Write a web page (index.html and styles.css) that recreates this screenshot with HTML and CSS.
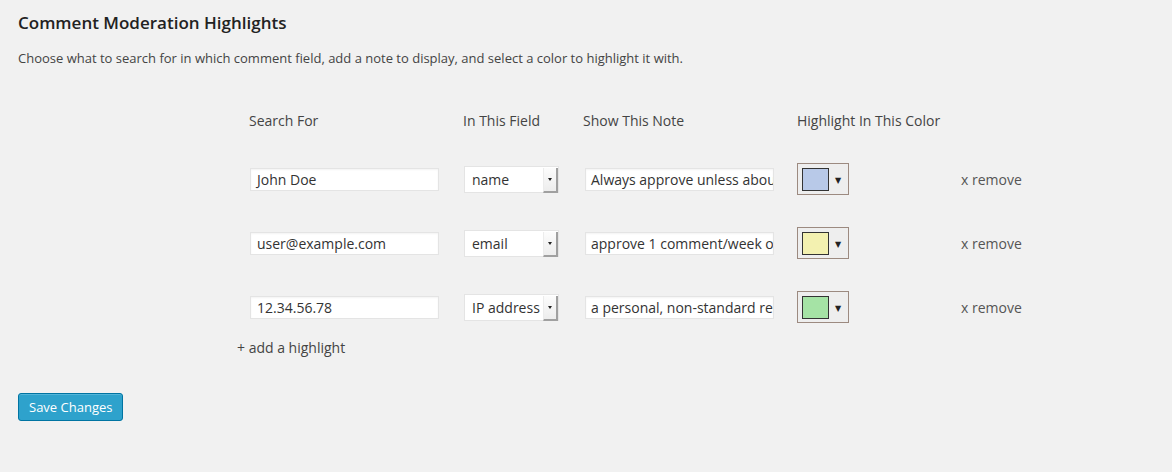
FILE: index.html
```html
<!DOCTYPE html>
<html>
<head>
<meta charset="utf-8">
<link rel="stylesheet" href="styles.css">
</head>
<body>
<div class="wrap">
  <h3 class="title">Comment Moderation Highlights</h3>
  <p class="desc">Choose what to search for in which comment field, add a note to display, and select a color to highlight it with.</p>

  <div class="highlights">
    <div class="grid">
      <div class="th">Search For</div>
      <div class="th">In This Field</div>
      <div class="th">Show This Note</div>
      <div class="th">Highlight In This Color</div>
      <div class="th"></div>

      <div class="cell"><div class="input">John Doe</div></div>
      <div class="cell"><div class="select"><span class="sel-text">name</span><span class="sel-btn"><span class="tri"></span></span></div></div>
      <div class="cell"><div class="input note">Always approve unless about</div></div>
      <div class="cell"><div class="picker"><span class="swatch blue"></span><span class="arrow">▼</span></div></div>
      <div class="cell"><span class="remove">x remove</span></div>

      <div class="cell"><div class="input">user@example.com</div></div>
      <div class="cell"><div class="select"><span class="sel-text">email</span><span class="sel-btn"><span class="tri"></span></span></div></div>
      <div class="cell"><div class="input note">approve 1 comment/week only</div></div>
      <div class="cell"><div class="picker"><span class="swatch yellow"></span><span class="arrow">▼</span></div></div>
      <div class="cell"><span class="remove">x remove</span></div>

      <div class="cell"><div class="input">12.34.56.78</div></div>
      <div class="cell"><div class="select"><span class="sel-text">IP address</span><span class="sel-btn"><span class="tri"></span></span></div></div>
      <div class="cell"><div class="input note">a personal, non-standard request</div></div>
      <div class="cell"><div class="picker"><span class="swatch green"></span><span class="arrow">▼</span></div></div>
      <div class="cell"><span class="remove">x remove</span></div>
    </div>
    <div class="add">+ add a highlight</div>
  </div>

  <div class="actions"><button class="save">Save Changes</button></div>
</div>
</body>
</html>
```

FILE: styles.css
```css
html, body {
  margin: 0;
  padding: 0;
  background: #f1f1f1;
}
body {
  font-family: "Open Sans", "DejaVu Sans", sans-serif;
  color: #444;
  font-size: 13px;
}
.wrap {
  padding: 12px 18px 0 18px;
}
.title {
  margin: 0;
  font-size: 17px;
  font-weight: 600;
  color: #222;
  line-height: 22px;
}
.desc {
  margin: 14px 0 0 0;
  font-size: 13px;
  line-height: 20px;
}
.highlights {
  margin-left: 219px;
  margin-top: 42px;
}
.grid {
  display: grid;
  grid-template-columns: 214px 120px 214px 164px auto;
  grid-template-rows: 37px repeat(3, 64px);
  padding-left: 12px;
  align-items: center;
}
.th {
  align-self: start;
  font-size: 14px;
  line-height: 22px;
  color: #444;
}
.cell {
  display: flex;
  align-items: center;
}
.input {
  box-sizing: border-box;
  width: 189px;
  height: 23px;
  margin-left: 1px;
  background: #fff;
  border: 1px solid #e4e4e4;
  box-shadow: inset 0 1px 2px rgba(0,0,0,0.05);
  font-size: 14px;
  line-height: 21px;
  padding: 0 6px;
  color: #333;
  white-space: nowrap;
  overflow: hidden;
}
.input.note {
  margin-left: 2px;
  padding-left: 5px;
}
.select {
  box-sizing: border-box;
  width: 95px;
  height: 27px;
  margin-left: 1px;
  display: flex;
  align-items: stretch;
  background: #fff;
  border: 1px solid #e4e4e4;
}
.sel-text {
  flex: 1;
  font-size: 14px;
  line-height: 25px;
  padding-left: 7px;
  color: #333;
  white-space: nowrap;
}
.sel-btn {
  width: 12px;
  border-left: 1px solid #ececec;
  border-right: 2px solid #a0a0a0;
  border-bottom: 2px solid #a0a0a0;
  background: linear-gradient(#fcfcfc, #ededed);
  display: flex;
  align-items: center;
  justify-content: center;
  margin: 1px 0 -1px 0;
}
.tri {
  width: 0;
  height: 0;
  border-left: 2.5px solid transparent;
  border-right: 2.5px solid transparent;
  border-top: 3px solid #222;
}
.picker {
  box-sizing: border-box;
  width: 52px;
  height: 32px;
  border: 1px solid #9c8a80;
  background: #eeeeee;
  display: flex;
  align-items: center;
  padding-left: 4px;
}
.swatch {
  box-sizing: border-box;
  width: 27px;
  height: 23px;
  border: 1px solid #333;
}
.swatch.blue { background: #b8c9e8; }
.swatch.yellow { background: #f3f1b0; }
.swatch.green { background: #a5e3a5; }
.arrow {
  font-size: 8px;
  color: #222;
  margin-left: 6px;
}
.remove {
  font-size: 14px;
  color: #555;
}
.add {
  font-size: 14px;
  color: #444;
  margin-top: -1px;
  line-height: 20px;
}
.actions {
  margin-top: 35px;
}
.save {
  font-family: "Open Sans", "DejaVu Sans", sans-serif;
  font-size: 13px;
  color: #fff;
  background: #2ea2cc;
  border: 1px solid #0074a2;
  border-radius: 3px;
  height: 28px;
  padding: 0 10px;
  box-shadow: inset 0 1px 0 rgba(120,200,230,0.5);
  line-height: 26px;
}
```
